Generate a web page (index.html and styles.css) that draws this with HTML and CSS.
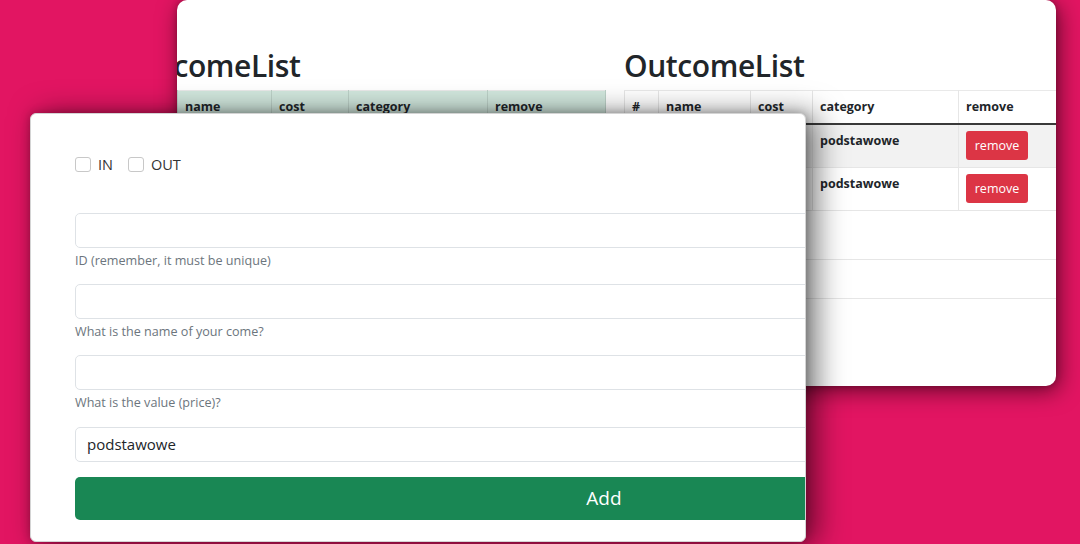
FILE: index.html
```html
<!DOCTYPE html>
<html lang="en">
<head>
<meta charset="utf-8">
<title>Budget</title>
<link rel="stylesheet" href="styles.css">
</head>
<body>
<div class="desk">
  <section class="window lists">
    <div class="lists-inner">
      <div class="col col-in">
        <h2 class="title">IncomeList</h2>
        <table class="tbl tbl-success">
          <colgroup><col style="width:31px"><col style="width:94px"><col style="width:77px"><col style="width:139px"><col style="width:118px"></colgroup>
          <thead><tr><th>#</th><th>name</th><th>cost</th><th>category</th><th>remove</th></tr></thead>
          <tbody>
            <tr><td></td><td></td><td></td><td></td><td></td></tr>
          </tbody>
        </table>
      </div>
      <div class="col col-out">
        <h2 class="title">OutcomeList</h2>
        <table class="tbl tbl-striped">
          <colgroup><col style="width:34px"><col style="width:92px"><col style="width:62px"><col style="width:146px"><col style="width:125px"></colgroup>
          <thead><tr><th>#</th><th>name</th><th>cost</th><th>category</th><th>remove</th></tr></thead>
          <tbody>
            <tr><td></td><td></td><td></td><td>podstawowe</td><td><button class="btn-remove">remove</button></td></tr>
            <tr><td></td><td></td><td></td><td>podstawowe</td><td><button class="btn-remove">remove</button></td></tr>
          </tbody>
        </table>
        <div class="summary">
          <div class="summary-row"></div>
          <div class="summary-row"></div>
        </div>
      </div>
    </div>
  </section>

  <section class="window form-card">
    <form class="form">
      <div class="checks">
        <label class="check"><span class="box"></span>IN</label>
        <label class="check"><span class="box"></span>OUT</label>
      </div>
      <div class="field">
        <div class="input"></div>
        <div class="hint">ID (remember, it must be unique)</div>
      </div>
      <div class="field">
        <div class="input"></div>
        <div class="hint">What is the name of your come?</div>
      </div>
      <div class="field">
        <div class="input"></div>
        <div class="hint">What is the value (price)?</div>
      </div>
      <div class="input select">podstawowe</div>
      <div class="btn-add">Add</div>
    </form>
  </section>
</div>
</body>
</html>
```

FILE: styles.css
```css
* { box-sizing: border-box; }
html, body { margin: 0; padding: 0; }
body {
  width: 1080px;
  height: 544px;
  overflow: hidden;
  background: #e21562;
  font-family: "Open Sans", "Noto Sans", sans-serif;
  color: #212529;
}
.desk { position: relative; width: 1080px; height: 544px; }

.window {
  position: absolute;
  background: #fff;
  overflow: hidden;
}

/* back window with the two lists */
.lists {
  left: 177px;
  top: 0;
  width: 879px;
  height: 386px;
  border-radius: 10px;
  box-shadow: 3px 5px 22px rgba(20, 0, 8, 0.6), 0 0 6px rgba(20, 0, 8, 0.25);
}
.lists-inner {
  display: flex;
  gap: 19px;
  margin-left: -31px;
  padding-top: 47px;
}
.col { width: 459px; flex: none; }
.title {
  margin: 0 0 5px;
  font-size: 30px;
  font-weight: 600;
  line-height: 38px;
  letter-spacing: -0.4px;
  color: #212529;
}
.tbl {
  border-collapse: collapse;
  table-layout: fixed;
  width: 459px;
  font-size: 12.5px;
  font-weight: 700;
}
.tbl th, .tbl td {
  border: 1px solid #e6e6e6;
  padding: 7px 7px;
  text-align: left;
  vertical-align: top;
  line-height: 18px;
}
.tbl thead th { height: 32px; border-bottom: 2px solid #3a3a3a; border-top-color: #e9e9e9; }
.tbl tbody td { height: 42px; }
.tbl-striped tbody tr:nth-child(odd) td { background: #f2f2f2; }
.tbl-success th, .tbl-success td { background: #d1e7dd; border-color: #bcd0c7; }
.tbl-success thead th { border-bottom-color: #bcd0c7; }

.btn-remove {
  display: block;
  border: 0;
  background: #dc3545;
  color: #fff;
  border-radius: 3px;
  font-family: inherit;
  font-size: 12.5px;
  font-weight: 400;
  width: 62px;
  height: 29px;
  padding: 0;
  margin-top: -1px;
}
.summary { margin-top: 48px; }
.summary-row { height: 39px; border-top: 1px solid #e6e6e6; }

/* front window with the form */
.form-card {
  left: 30px;
  top: 113px;
  width: 776px;
  height: 429px;
  border: 1px solid #d4d4d4;
  border-radius: 6px;
  box-shadow: 10px 2px 30px rgba(0, 0, 0, 0.55), 0 0 10px rgba(0, 0, 0, 0.25);
}
.form {
  width: 1100px;
  padding: 38px 0 0 44px;
  display: flex;
  flex-direction: column;
}
.checks {
  display: flex;
  gap: 15px;
  height: 24px;
  align-items: center;
  margin-bottom: 37px;
}
.check {
  display: flex;
  align-items: center;
  gap: 7px;
  font-size: 14.5px;
  color: #333;
}
.box {
  width: 16px;
  height: 15px;
  border: 1px solid #c8c8c8;
  border-radius: 3px;
  background: #fff;
}
.field { margin-bottom: 14px; }
.field .hint { margin-bottom: -1px; }
.input {
  width: 1058px;
  height: 35px;
  border: 1px solid #dee2e6;
  border-radius: 5px;
  background: #fff;
}
.hint {
  margin-top: 3px;
  font-size: 12.6px;
  line-height: 20px;
  color: #6c757d;
}
.select {
  margin-top: 1px;
  padding: 0 11px;
  font-size: 15px;
  line-height: 33px;
  color: #212529;
}
.btn-add {
  margin-top: 15px;
  width: 1058px;
  height: 43px;
  border-radius: 5px;
  background: #198754;
  color: #fff;
  font-size: 19px;
  line-height: 43px;
  text-align: center;
}
```
